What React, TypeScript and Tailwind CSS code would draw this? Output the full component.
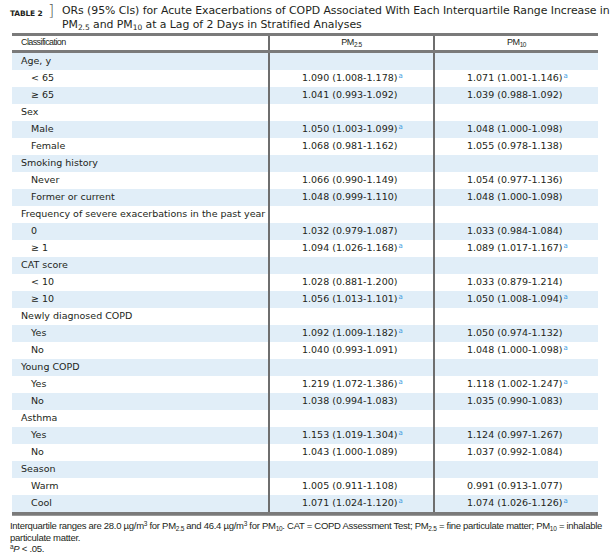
import React from "react";

type Row = { label: string; cat?: boolean; a?: string; aSig?: boolean; b?: string; bSig?: boolean };

const rows: Row[] = [
  { label: "Age, y", cat: true },
  { label: "< 65", a: "1.090 (1.008-1.178)", aSig: true, b: "1.071 (1.001-1.146)", bSig: true },
  { label: "≥ 65", a: "1.041 (0.993-1.092)", b: "1.039 (0.988-1.092)" },
  { label: "Sex", cat: true },
  { label: "Male", a: "1.050 (1.003-1.099)", aSig: true, b: "1.048 (1.000-1.098)" },
  { label: "Female", a: "1.068 (0.981-1.162)", b: "1.055 (0.978-1.138)" },
  { label: "Smoking history", cat: true },
  { label: "Never", a: "1.066 (0.990-1.149)", b: "1.054 (0.977-1.136)" },
  { label: "Former or current", a: "1.048 (0.999-1.110)", b: "1.048 (1.000-1.098)" },
  { label: "Frequency of severe exacerbations in the past year", cat: true },
  { label: "0", a: "1.032 (0.979-1.087)", b: "1.033 (0.984-1.084)" },
  { label: "≥ 1", a: "1.094 (1.026-1.168)", aSig: true, b: "1.089 (1.017-1.167)", bSig: true },
  { label: "CAT score", cat: true },
  { label: "< 10", a: "1.028 (0.881-1.200)", b: "1.033 (0.879-1.214)" },
  { label: "≥ 10", a: "1.056 (1.013-1.101)", aSig: true, b: "1.050 (1.008-1.094)", bSig: true },
  { label: "Newly diagnosed COPD", cat: true },
  { label: "Yes", a: "1.092 (1.009-1.182)", aSig: true, b: "1.050 (0.974-1.132)" },
  { label: "No", a: "1.040 (0.993-1.091)", b: "1.048 (1.000-1.098)", bSig: true },
  { label: "Young COPD", cat: true },
  { label: "Yes", a: "1.219 (1.072-1.386)", aSig: true, b: "1.118 (1.002-1.247)", bSig: true },
  { label: "No", a: "1.038 (0.994-1.083)", b: "1.035 (0.990-1.083)" },
  { label: "Asthma", cat: true },
  { label: "Yes", a: "1.153 (1.019-1.304)", aSig: true, b: "1.124 (0.997-1.267)" },
  { label: "No", a: "1.043 (1.000-1.089)", b: "1.037 (0.992-1.084)" },
  { label: "Season", cat: true },
  { label: "Warm", a: "1.005 (0.911-1.108)", b: "0.991 (0.913-1.077)" },
  { label: "Cool", a: "1.071 (1.024-1.120)", aSig: true, b: "1.074 (1.026-1.126)", bSig: true },
];

const narrow = "font-['Liberation_Sans_Narrow','Liberation_Sans',sans-serif]";

function Sup() {
  return <sup className="text-[7px] text-[#3b9be0] -top-[3px] ml-[1px]">a</sup>;
}

export default function App() {
  return (
    <div className="w-[613px] h-[556px] bg-white text-[#231f20] font-['DejaVu_Sans',sans-serif] overflow-hidden">
      {/* title */}
      <div className="flex items-start pl-[10px] pt-[4px] h-[33px]">
        <span className="text-[7.5px] font-bold tracking-tight mt-[4px] w-[38px] whitespace-nowrap">TABLE 2</span>
        <span className="text-[16px] leading-[16px] font-thin text-[#555] w-[14px] -mt-[1px]">]</span>
        <p className="text-[10.9px] leading-[14px] whitespace-nowrap tracking-[-0.05px]">
          ORs (95% CIs) for Acute Exacerbations of COPD Associated With Each Interquartile Range Increase in
          <br />
          PM<sub className="text-[7.5px]">2.5</sub> and PM<sub className="text-[7.5px]">10</sub> at a Lag of 2 Days in Stratified Analyses
        </p>
      </div>

      {/* table */}
      <div className="ml-[12px] w-[586px] border-t-[3px] border-[#7a7a7a]">
        <div className={`grid grid-cols-[256px_165px_165px] h-[17px] items-center text-[9px] ${narrow} border-b-[3px] border-[#7a7a7a]`}>
          <div className="pl-[9px] tracking-[-0.6px]">Classification</div>
          <div className="h-full flex items-center justify-center border-l-2 border-[#6e6e6e] tracking-[-0.4px]">
            PM<sub className="text-[6.5px]">2.5</sub>
          </div>
          <div className="h-full flex items-center justify-center border-l-2 border-[#6e6e6e] tracking-[-0.4px]">
            PM<sub className="text-[6.5px]">10</sub>
          </div>
        </div>
        {rows.map((r, i) => (
          <div
            key={i}
            className={`grid grid-cols-[256px_165px_165px] h-[17px] items-center text-[9.5px] ${i % 2 === 0 ? "bg-[#e1eef8]" : "bg-white"}`}
          >
            <div className={`whitespace-nowrap ${r.cat ? "pl-[9px]" : "pl-[19px]"}`}>{r.label}</div>
            <div className="h-full flex items-center pl-[32px] border-l-2 border-[#6e6e6e]">
              {r.a}
              {r.aSig && <Sup />}
            </div>
            <div className="h-full flex items-center pl-[32px] border-l-2 border-[#6e6e6e]">
              {r.b}
              {r.bSig && <Sup />}
            </div>
          </div>
        ))}
        <div className="border-t-[3px] border-[#7a7a7a] h-[2px]" />
        <div className="border-t border-[#9a9a9a]" />
      </div>

      {/* footnote */}
      <div className={`pl-[10px] pr-[1px] mt-[4px] text-[9.5px] leading-[11.5px] ${narrow} tracking-[-0.28px]`}>
        <p>
          Interquartile ranges are 28.0 µg/m<sup className="text-[6.5px]">3</sup> for PM<sub className="text-[6.5px]">2.5</sub> and 46.4 µg/m<sup className="text-[6.5px]">3</sup> for PM<sub className="text-[6.5px]">10</sub>. CAT = COPD Assessment Test; PM<sub className="text-[6.5px]">2.5</sub> = fine particulate matter; PM<sub className="text-[6.5px]">10</sub> = inhalable particulate matter.
        </p>
        <p>
          <sup className="text-[6.5px]">a</sup>
          <i>P</i> &lt; .05.
        </p>
      </div>
    </div>
  );
}
